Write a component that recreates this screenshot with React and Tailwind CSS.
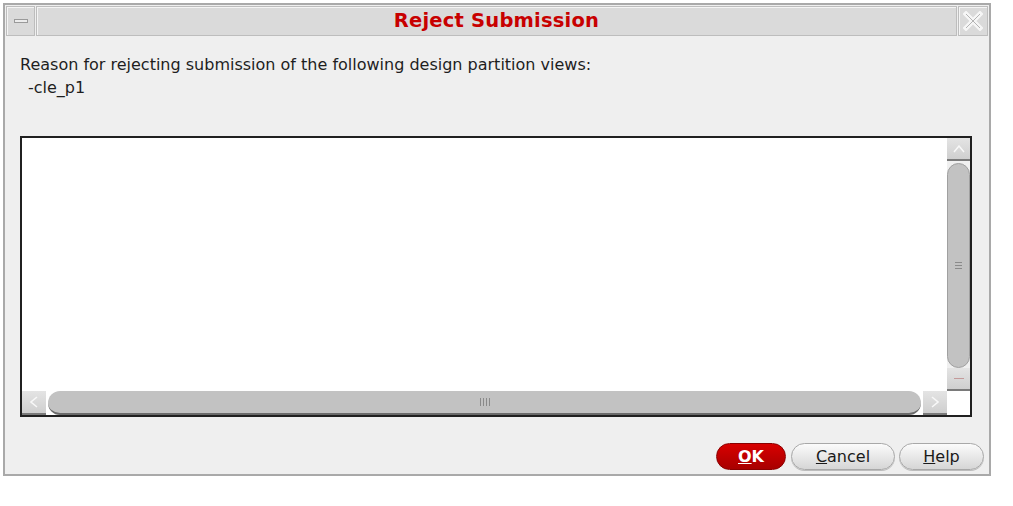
const font = { fontFamily: '"DejaVu Sans", Verdana, sans-serif' };

function TitleBar() {
  return (
    <div className="flex h-[31px] gap-px px-px pt-px">
      <div className="flex w-[29px] items-center justify-center border border-[#bdbdbd] bg-[#dadada] shadow-[inset_1px_1px_0_#f4f4f4]">
        <div className="h-[4px] w-[14px] border border-[#9a9a9a] bg-[#ececec]" />
      </div>
      <div className="flex flex-1 items-center justify-center border border-[#bdbdbd] bg-[#dadada] shadow-[inset_1px_1px_0_#f4f4f4]">
        <span className="text-[19.5px] leading-none font-bold tracking-[0.2px] text-[#c80000]">Reject Submission</span>
      </div>
      <div className="flex w-[30px] items-center justify-center border border-[#bdbdbd] bg-[#dadada] shadow-[inset_1px_1px_0_#f4f4f4]">
        <svg width="20" height="20" viewBox="0 0 20 20">
          <path d="M3 3 L17 17 M17 3 L3 17" stroke="#f6f6f6" strokeWidth="5" strokeLinecap="square" />
          <path d="M3 3 L17 17 M17 3 L3 17" stroke="#b4b4b4" strokeWidth="1" fill="none" />
        </svg>
      </div>
    </div>
  );
}

function VScroll() {
  return (
    <div className="flex w-[23px] flex-col bg-[#f0f0f0]">
      <div className="flex h-[23px] items-center justify-center border-b-2 border-[#7a7a7a] bg-gradient-to-b from-[#e4e4e4] to-[#cfcfcf]">
        <svg width="12" height="8" viewBox="0 0 12 8">
          <path d="M1 7 L6 1 L11 7" stroke="#f8f8f8" strokeWidth="1.5" fill="none" />
        </svg>
      </div>
      <div className="mt-[2px] flex flex-1 items-center justify-center rounded-t-full rounded-b-full border border-[#a0a0a0] bg-[#c2c2c2]">
        <div className="flex flex-col gap-[2px]">
          <div className="h-px w-[7px] bg-[#8a8a8a]" />
          <div className="h-px w-[7px] bg-[#8a8a8a]" />
          <div className="h-px w-[7px] bg-[#8a8a8a]" />
        </div>
      </div>
      <div className="flex h-[23px] items-center justify-center border-b-2 border-[#7a7a7a] bg-gradient-to-b from-[#e4e4e4] to-[#cfcfcf]">
        <div className="h-px w-[10px] bg-[#c49a9a]" />
      </div>
    </div>
  );
}

function HScroll() {
  return (
    <div className="flex h-[24px]">
      <div className="flex w-[24px] items-center justify-center border-b-2 border-[#7a7a7a] bg-gradient-to-b from-[#e4e4e4] to-[#cfcfcf]">
        <svg width="8" height="12" viewBox="0 0 8 12">
          <path d="M7 1 L1 6 L7 11" stroke="#f8f8f8" strokeWidth="1.5" fill="none" />
        </svg>
      </div>
      <div className="mx-[2px] flex flex-1 items-center justify-center rounded-l-full rounded-r-full border-b-2 border-[#6a6a6a] bg-[#c2c2c2]">
        <div className="flex gap-[2px]">
          <div className="h-[8px] w-px bg-[#8a8a8a]" />
          <div className="h-[8px] w-px bg-[#8a8a8a]" />
          <div className="h-[8px] w-px bg-[#8a8a8a]" />
          <div className="h-[8px] w-px bg-[#8a8a8a]" />
        </div>
      </div>
      <div className="flex w-[24px] items-center justify-center border-b-2 border-[#7a7a7a] bg-gradient-to-b from-[#e4e4e4] to-[#cfcfcf]">
        <svg width="8" height="12" viewBox="0 0 8 12">
          <path d="M1 1 L7 6 L1 11" stroke="#f8f8f8" strokeWidth="1.5" fill="none" />
        </svg>
      </div>
      <div className="w-[23px] bg-[#ffffff]" />
    </div>
  );
}

function Btn({ children, primary, w }) {
  return (
    <button
      className={
        primary
          ? 'flex h-[27px] items-center justify-center rounded-full border border-[#8a0000] bg-gradient-to-b from-[#d80000] to-[#a80000] text-[16px] font-bold text-white ' + w
          : 'flex h-[27px] items-center justify-center rounded-full border border-[#a8a8a8] bg-gradient-to-b from-[#fbfbfb] to-[#d6d6d6] text-[16px] text-[#1a1a1a] shadow-[0_1px_0_#bcbcbc] ' + w
      }
      style={font}
    >
      {children}
    </button>
  );
}

export default function App() {
  return (
    <div className="h-[506px] w-[1013px] bg-white" style={font}>
      <div className="ml-[3px] pt-[3px]">
        <div className="flex h-[473px] w-[988px] flex-col border-2 border-[#a9a9a9] bg-[#efefef]">
          <TitleBar />
          <div className="px-[15px] pt-[17px] text-[16px] leading-[23px] text-[#1e1e1e]">
            <div>Reason for rejecting submission of the following design partition views:</div>
            <div className="pl-[8px]">-cle_p1</div>
          </div>
          <div className="ml-[15px] mt-[37px] flex h-[281px] w-[952px] flex-col border-2 border-[#202020] bg-white">
            <div className="flex flex-1">
              <div className="flex-1" />
              <VScroll />
            </div>
            <HScroll />
          </div>
          <div className="mt-[26px] flex justify-end gap-[4px] pr-[5px]">
            <div className="mr-px">
              <Btn primary w="w-[70px]"><span className="underline">O</span>K</Btn>
            </div>
            <Btn w="w-[104px]"><span className="underline">C</span>ancel</Btn>
            <Btn w="w-[85px]"><span className="underline">H</span>elp</Btn>
          </div>
        </div>
      </div>
    </div>
  );
}
